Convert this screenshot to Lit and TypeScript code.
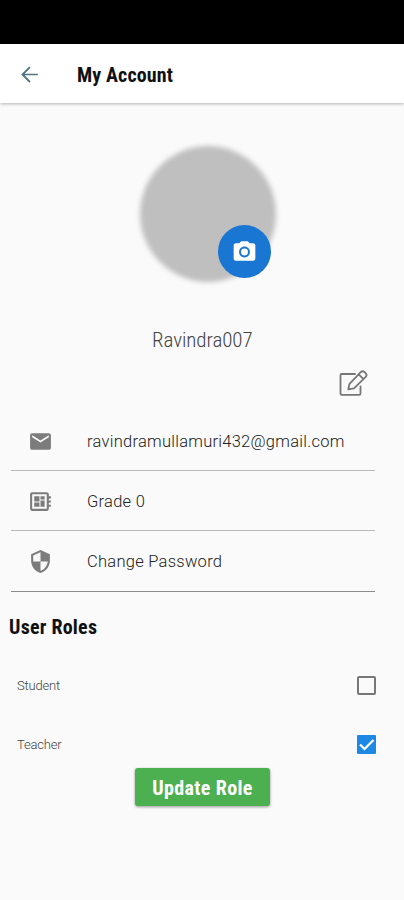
import { LitElement, html, css, svg } from "lit";
import { customElement, state } from "lit/decorators.js";

const icons = {
  mail: svg`<path d="M20 4H4c-1.100 0-2 .9-2 2v12c0 1.100.9 2 2 2h16c1.100 0 2-.9 2-2V6c0-1.100-.9-2-2-2zm0 4l-8 5-8-5V6l8 5 8-5v2z"/>`,
  board: svg`<path d="M22 9V7h-2V5c0-1.100-.9-2-2-2H4c-1.100 0-2 .9-2 2v14c0 1.100.9 2 2 2h14c1.100 0 2-.9 2-2v-2h2v-2h-2v-2h2v-2h-2V9h2zm-4 10H4V5h14v14zM6 13h5v4H6v-4zm6-6h4v3h-4V7zM6 7h5v5H6V7zm6 4h4v6h-4v-6z"/>`,
  shield: svg`<path d="M12 1L3 5v6c0 5.550 3.840 10.740 9 12 5.160-1.260 9-6.450 9-12V5l-9-4zm0 10.990h7c-.53 4.120-3.280 7.790-7 8.940V12H5V6.300l7-3.110v8.800z"/>`,
};

@customElement("app-root")
export class AppRoot extends LitElement {
  @state() private roles = [
    { name: "Student", on: false },
    { name: "Teacher", on: true },
  ];

  static styles = css`
    :host { display: block; height: 900px; background: #fafafa; color: #111; font-family: Roboto, "Liberation Sans", sans-serif; overflow: hidden; }
    * { box-sizing: border-box; }
    svg { display: block; flex: none; }
    .status { height: 44px; background: #000; }
    .bar { height: 59px; background: #fff; box-shadow: 0 1px 3px rgba(0,0,0,.28); display: flex; align-items: center; padding: 2px 0 0 17px; }
    .back { width: 25px; height: 25px; fill: #4f7482; margin: -1px 35px 0 0; }
    .title { font-size: 20px; line-height: 24px; font-weight: 700; font-stretch: 75%; white-space: nowrap; }
    .bar .title { letter-spacing: .12px; }
    .photo { position: relative; width: 136px; height: 136px; margin: 43px 0 0 140px; }
    .disc { width: 136px; height: 136px; border-radius: 50%; background: #bfbfbf; filter: blur(2.6px); }
    .camera { position: absolute; left: 78px; top: 79px; width: 53px; height: 53px; border-radius: 50%; background: #1976d2; display: grid; place-items: center; }
    .camera svg { width: 27px; height: 26px; fill: #fff; }
    .name { margin: 46px 0 0 152px; height: 24px; font-size: 21px; line-height: 24px; font-weight: 300; font-stretch: 75%; color: #444; letter-spacing: -.08px; }
    .edit { margin: 17px 0 0 338px; width: 31px; height: 29px; }
    .list { margin: 13px 29px 0 11px; }
    .row { height: 60px; display: flex; align-items: center; padding: 2px 0 0 17px; border-bottom: 1px solid #b9b9b9; font-size: 16.5px; font-weight: 300; color: #222; letter-spacing: .26px; }
    .row:last-child { height: 61px; padding-top: 1px; border-color: #8c8c8c; }
    .row svg { width: 25px; height: 25px; fill: #7c7c7c; margin: -1px 34px 0 0; }
    .heading { margin: 23px 0 0 9px; height: 24px; }
    .heading .title { letter-spacing: .22px; }
    .roles { margin: 17px 28px 0 17px; }
    .role { height: 59px; display: flex; align-items: center; justify-content: space-between; font-size: 13px; font-weight: 300; color: #444; letter-spacing: -.2px; }
    .box { width: 19px; height: 19px; border: 2px solid #777; border-radius: 2px; }
    .box.on { border: 0; background: #1e88e5; border-radius: 1px; }
    .update { display: flex; align-items: center; justify-content: center; padding: 2px 0 0; margin: -6px 0 0 135px; width: 135px; height: 38px; border: 0; border-radius: 3px; background: #4caf50; color: #fff; font-family: inherit; box-shadow: 0 1px 3px rgba(0,0,0,.4); }
    .update .title { letter-spacing: .36px; }
  `;

  render() {
    return html`
      <div class="status"></div>
      <header class="bar">
        <svg class="back" viewBox="0 0 24 24"><path d="M20 11.200H7.300l5.700-5.790L11.800 4.200l-7.800 7.800 7.800 7.800 1.200-1.210L7.300 12.800H20z"/></svg>
        <span class="title">My Account</span>
      </header>
      <div class="photo">
        <div class="disc"></div>
        <div class="camera"><svg viewBox="0 0 24 24"><circle cx="12" cy="12" r="3.200"/><path d="M9 2L7.170 4H4c-1.100 0-2 .9-2 2v12c0 1.100.9 2 2 2h16c1.100 0 2-.9 2-2V6c0-1.100-.9-2-2-2h-3.170L15 2H9zm3 15c-2.760 0-5-2.240-5-5s2.240-5 5-5 5 2.240 5 5-2.240 5-5 5z"/></svg></div>
      </div>
      <div class="name">Ravindra007</div>
      <svg class="edit" viewBox="0 0 31 29" fill="none" stroke="#777" stroke-width="1.800" stroke-linejoin="round" stroke-linecap="round">
        <path d="M17 5H3.800Q2.500 5 2.500 6.300V24.500Q2.500 25.800 3.800 25.800H21.200Q22.500 25.800 22.500 24.500V17.500"/>
        <path d="M10.300 20.300L11.500 14.800L22.700 3.200Q24.600 1.400 26.700 3.200L27.800 4.300Q29.400 6 27.700 7.900L16 19.300ZM20.700 5.300L25.500 10.200"/>
      </svg>
      <section class="list">
        <div class="row"><svg viewBox="0 0 24 24">${icons.mail}</svg><span>ravindramullamuri432@gmail.com</span></div>
        <div class="row"><svg viewBox="0 0 24 24">${icons.board}</svg><span>Grade 0</span></div>
        <div class="row"><svg viewBox="0 0 24 24">${icons.shield}</svg><span>Change Password</span></div>
      </section>
      <div class="heading"><span class="title">User Roles</span></div>
      <section class="roles">
        ${this.roles.map((r) => html`<div class="role"><span>${r.name}</span>
          <span class="box ${r.on ? "on" : ""}">${r.on ? html`<svg viewBox="0 0 19 19" fill="none" stroke="#fff" stroke-width="2.200"><path d="M3 9.500l4.500 4.500L16.500 5"/></svg>` : ""}</span></div>`)}
      </section>
      <button class="update"><span class="title">Update Role</span></button>
    `;
  }
}
